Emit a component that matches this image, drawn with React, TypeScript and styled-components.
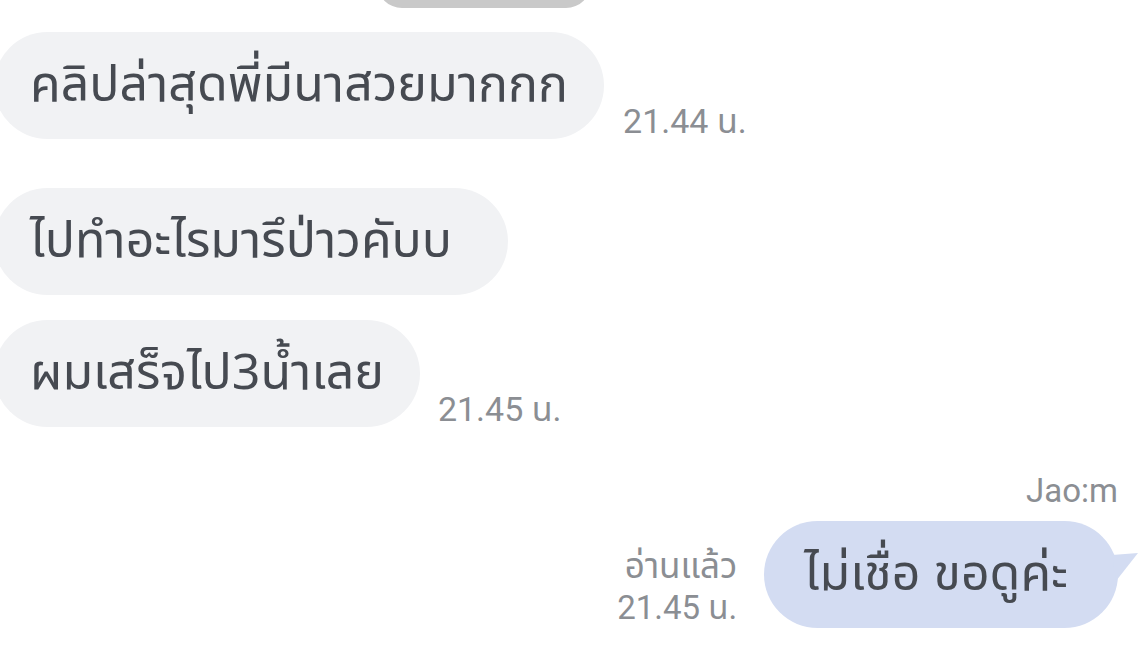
import React from "react";
import styled, { createGlobalStyle } from "styled-components";

const Global = createGlobalStyle`
  html, body { margin: 0; padding: 0; background: #ffffff; }
  body { width: 1144px; height: 660px; overflow: hidden; font-family: "Noto Sans Thai", Roboto, "Noto Sans", "DejaVu Sans", sans-serif; }
`;

const Screen = styled.div`
  width: 1144px;
  height: 660px;
  display: flex;
  flex-direction: column;
  overflow: hidden;
  background: #ffffff;
`;

const TopStub = styled.div`
  width: 214px;
  height: 50px;
  margin: -42px 0 0 377px;
  background: #c9c9c9;
  border-radius: 26px;
  flex-shrink: 0;
`;

const Row = styled.div<{ $top: number }>`
  display: flex;
  align-items: flex-end;
  margin-top: ${(p) => p.$top}px;
  flex-shrink: 0;
`;

const Bubble = styled.div<{ $mine?: boolean; $extra?: number }>`
  position: relative;
  height: 107px;
  box-sizing: border-box;
  display: flex;
  align-items: center;
  padding: 0 ${(p) => (p.$mine ? 50 : 36 + (p.$extra ?? 0))}px 0 ${(p) => (p.$mine ? 40 : 36)}px;
  margin-left: ${(p) => (p.$mine ? 0 : -6)}px;
  border-radius: 54px;
  background: ${(p) => (p.$mine ? "#d3dcf2" : "#f1f2f4")};
  color: #464a51;
  font-size: 50px;
  white-space: nowrap;
`;

const Tail = styled.svg`
  position: absolute;
  right: -20px;
  top: 30px;
  width: 26px;
  height: 32px;
`;

const Time = styled.div<{ $gap: number }>`
  margin: 0 0 -1px ${(p) => p.$gap}px;
  font-family: Roboto, "Noto Sans Thai", sans-serif;
  font-size: 34px;
  color: #8b8e93;
  white-space: nowrap;
  line-height: 1.1;
`;

const MineBlock = styled.div`
  display: flex;
  flex-direction: column;
  align-items: flex-end;
  margin-top: 46px;
  padding-right: 26px;
  flex-shrink: 0;
`;

const Sender = styled.div`
  font-family: Roboto, sans-serif;
  font-size: 33px;
  color: #8b8e93;
  margin-bottom: 12px;
  line-height: 1.1;
`;

const MineRow = styled.div`
  display: flex;
  align-items: flex-end;
  gap: 27px;
`;

const ReadInfo = styled.div`
  display: flex;
  flex-direction: column;
  align-items: flex-end;
  font-family: Roboto, "Noto Sans Thai", sans-serif;
  color: #8b8e93;
`;

const ReadLabel = styled.span`
  font-size: 35px;
  line-height: 42px;
`;

const ReadTime = styled.span`
  font-size: 33px;
  line-height: 40px;
`;

export default function App() {
  return (
    <Screen>
      <Global />
      <TopStub />
      <Row $top={24}>
        <Bubble>คลิปล่าสุดพี่มีนาสวยมากกก</Bubble>
        <Time $gap={19}>21.44 น.</Time>
      </Row>
      <Row $top={49}>
        <Bubble $extra={20}>ไปทำอะไรมารึป่าวคับบ</Bubble>
      </Row>
      <Row $top={25}>
        <Bubble>ผมเสร็จไป3น้ำเลย</Bubble>
        <Time $gap={18}>21.45 น.</Time>
      </Row>
      <MineBlock>
        <Sender>Jao:m</Sender>
        <MineRow>
          <ReadInfo>
            <ReadLabel>อ่านแล้ว</ReadLabel>
            <ReadTime>21.45 น.</ReadTime>
          </ReadInfo>
          <Bubble $mine>
            ไม่เชื่อ ขอดูค่ะ
            <Tail viewBox="0 0 26 32">
              <path d="M0 4 L26 2 L4 30 Z" fill="#d3dcf2" />
            </Tail>
          </Bubble>
        </MineRow>
      </MineBlock>
    </Screen>
  );
}
